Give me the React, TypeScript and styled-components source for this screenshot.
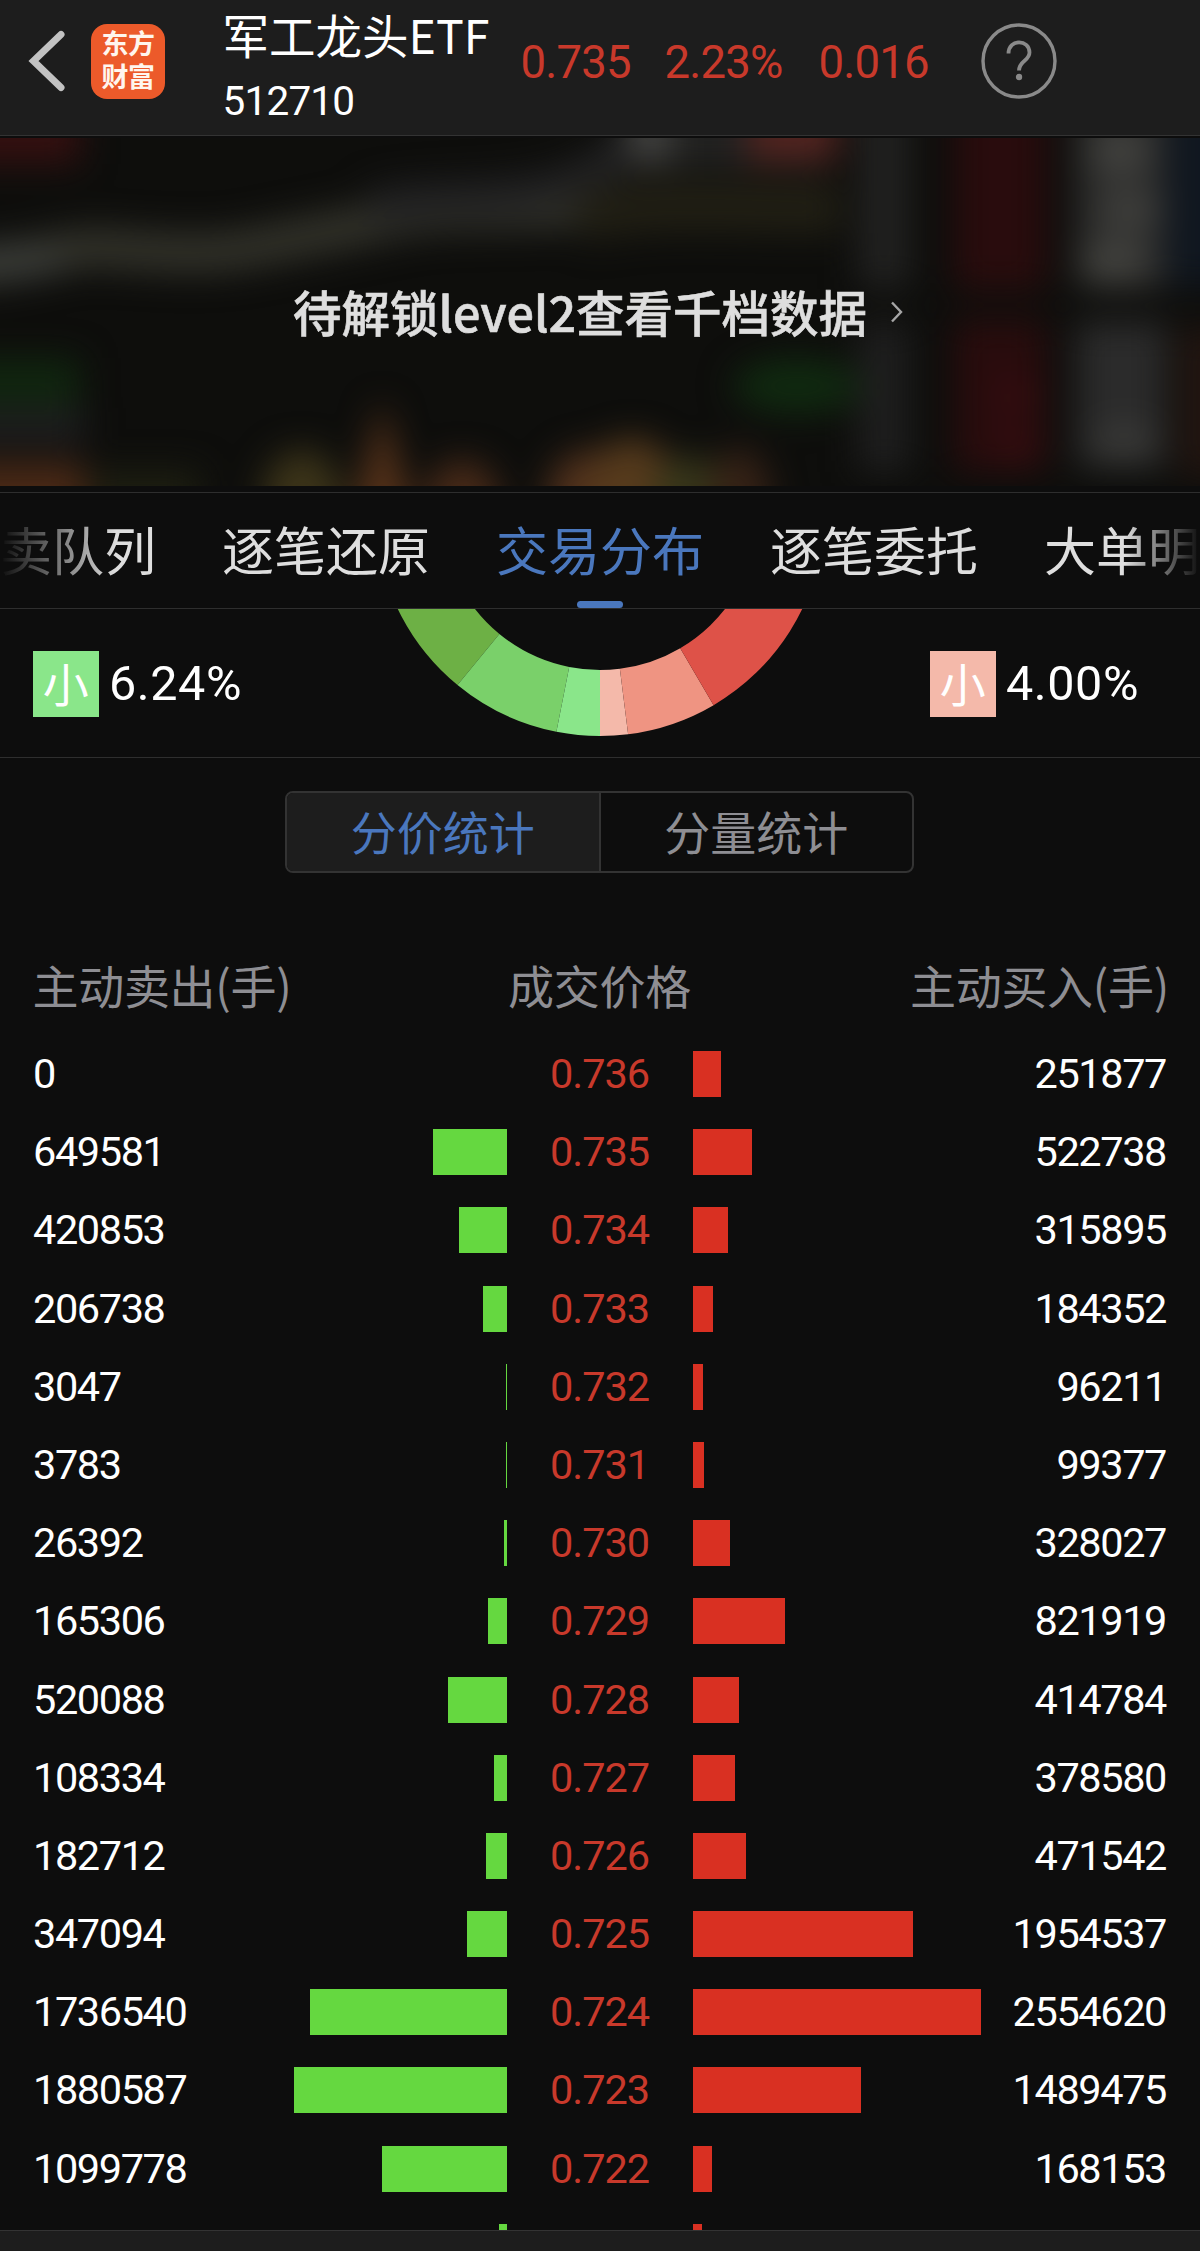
import React from "react";
import styled, { createGlobalStyle } from "styled-components";

const CJK = '"Noto Sans CJK SC", "Noto Sans", sans-serif';
const NUM = 'Roboto, "Noto Sans CJK SC", sans-serif';

const Global = createGlobalStyle`
  body { margin: 0; background: #0d0d0d; }
  * { box-sizing: border-box; }
`;

const Page = styled.main`
  width: 1200px;
  height: 2251px;
  overflow: hidden;
  display: flex;
  flex-direction: column;
  background: #0d0d0d;
  color: #fff;
  font-family: ${CJK};
`;

/* ---------- header ---------- */

const Header = styled.header`
  flex: none;
  height: 136px;
  display: flex;
  align-items: flex-start;
  padding-left: 27px;
  background: #1d1d1d;
  border-bottom: 1px solid #333;
`;

const BackIcon = styled.svg`
  flex: none;
  width: 40px;
  height: 64px;
  margin-top: 29px;
`;

const Logo = styled.div`
  flex: none;
  width: 74px;
  height: 75px;
  margin: 24px 0 0 24px;
  padding-top: 5px;
  border-radius: 16px;
  background: #ec5a2a;
  color: #fff6ee;
  font-family: "Liberation Sans", "Noto Sans CJK SC", sans-serif;
  font-size: 27px;
  font-weight: 700;
  letter-spacing: -0.6px;
  text-align: center;
`;

const LogoLine = styled.div`
  height: 33px;
  line-height: 33px;
`;

const Names = styled.div`
  flex: none;
  width: 298px;
  margin-left: 57.5px;
  display: flex;
  flex-direction: column;
`;

const FundName = styled.div`
  height: 73px;
  font-size: 46.5px;
  line-height: 68px;
  white-space: nowrap;
`;

const FundCode = styled.div`
  height: 56px;
  font-family: ${NUM};
  font-size: 40.5px;
  line-height: 56px;
  letter-spacing: -0.8px;
`;

const Quotes = styled.div`
  flex: none;
  width: 460px;
  display: grid;
  grid-template-columns: 144px 154px 1fr;
  color: #c8392b;
  font-family: ${NUM};
  font-size: 45.5px;
  line-height: 126px;
  letter-spacing: -0.8px;
`;

const HelpIcon = styled.svg`
  flex: none;
  width: 78px;
  height: 78px;
  margin-top: 22px;
  margin-left: -1px;
`;

/* ---------- level2 banner ---------- */

const Banner = styled.section`
  flex: none;
  position: relative;
  height: 348px;
  margin-top: 2px;
  overflow: hidden;
  display: flex;
  align-items: center;
  justify-content: center;
`;

const BlurredChart = styled.svg`
  position: absolute;
  inset: 0;
  width: 1200px;
  height: 348px;
`;

const BannerText = styled.div`
  position: relative;
  display: flex;
  align-items: center;
  gap: 23px;
  margin-left: -4px;
  margin-top: -3px;
  color: #dedede;
  font-size: 48.5px;
  font-weight: 500;
  -webkit-text-stroke: 0.6px #dedede;
  line-height: 72px;
  white-space: nowrap;
`;

const Chevron = styled.svg`
  width: 13px;
  height: 24px;
  margin-top: 2px;
`;

/* ---------- tabs ---------- */

const Tabs = styled.nav`
  flex: none;
  position: relative;
  height: 117px;
  margin-top: 6px;
  border-top: 1px solid #2e2e2e;
  border-bottom: 1px solid #2e2e2e;
  display: flex;
  gap: 66px;
  overflow: hidden;

  &::after {
    content: "";
    position: absolute;
    inset: 0;
    pointer-events: none;
    background: linear-gradient(90deg, #0d0d0d 0, rgba(13, 13, 13, 0) 116px,
      rgba(13, 13, 13, 0) 1124px, #0d0d0d 1200px);
  }
`;

const Tab = styled.div<{ $active?: boolean }>`
  flex: none;
  display: flex;
  flex-direction: column;
  align-items: center;
  justify-content: space-between;
  color: ${(p) => (p.$active ? "#4a77bd" : "#dedede")};
  font-size: 52px;
  line-height: 108px;
  white-space: nowrap;
`;

const TabLabel = styled.span`
  height: 108px;
  padding-top: 2px;
`;

const Indicator = styled.i`
  width: 46px;
  height: 7px;
  border-radius: 4px;
  background: #4a77bd;
`;

/* ---------- distribution ---------- */

const Distribution = styled.section`
  flex: none;
  height: 149px;
  display: grid;
  grid-template-columns: 300px 600px 300px;
  border-bottom: 1px solid #2e2e2e;
`;

const Legend = styled.div<{ $inset: number }>`
  display: flex;
  align-items: center;
  gap: 10px;
  height: 66px;
  margin-top: 42px;
  padding-left: ${(p) => p.$inset}px;
  font-family: ${NUM};
  font-size: 48.5px;
  line-height: 70px;
  letter-spacing: 0.6px;
`;

const Chip = styled.span<{ $color: string }>`
  width: 66px;
  height: 66px;
  background: ${(p) => p.$color};
  font-family: ${CJK};
  font-size: 46px;
  line-height: 62px;
  text-align: center;
`;

const Donut = styled.svg`
  width: 600px;
  height: 147px;
`;

/* ---------- segmented control ---------- */

const Segmented = styled.div`
  flex: none;
  align-self: center;
  width: 629px;
  height: 82px;
  margin: 33px 0 0 -1px;
  display: flex;
  border: 2px solid #333;
  border-radius: 8px;
  overflow: hidden;
`;

const Segment = styled.div<{ $active?: boolean }>`
  flex: 1;
  background: ${(p) => (p.$active ? "#1d1d1d" : "transparent")};
  color: ${(p) => (p.$active ? "#4a77bd" : "#8e8e93")};
  font-size: 46px;
  line-height: 75px;
  text-align: center;

  & + & {
    border-left: 2px solid #333;
  }
`;

/* ---------- table ---------- */

const Columns = styled.div`
  display: grid;
  grid-template-columns: 473px 186px 474px;
  padding-left: 34px;
`;

const HeadRow = styled(Columns)`
  flex: none;
  height: 66px;
  margin-top: 81px;
  grid-template-columns: 474px 186px 476.5px;
  padding-left: 32.5px;
  color: #8e8e93;
  font-size: 46px;
  line-height: 60px;
  letter-spacing: -0.3px;
  white-space: nowrap;

  & > :nth-child(2) { text-align: center; }
  & > :nth-child(3) { text-align: right; }
`;

const TableBody = styled.div`
  flex: none;
  height: 1210px;
  overflow: hidden;
  padding-top: 15px;
`;

const Row = styled(Columns)`
  height: 78.2px;
  grid-template-columns: 473.5px 186px 473.5px;
  padding-left: 33px;
  font-family: ${NUM};
  font-size: 41.5px;
  line-height: 77px;
  letter-spacing: -1.4px;
`;

const Side = styled.div`
  display: flex;
  justify-content: space-between;
`;

const Price = styled.div`
  color: #c8392b;
  text-align: center;
  letter-spacing: -1px;
`;

const Bar = styled.div<{ $color: string }>`
  height: 46px;
  margin-top: 16px;
  background: ${(p) => p.$color};
`;

const Footer = styled.footer`
  flex: 1;
  border-top: 1px solid #333;
  background: #1d1d1d;
`;

const BAR_MAX = 288.7;
const VOLUME_MAX = 2554620;
const barWidth = (v: number) => (v / VOLUME_MAX) * BAR_MAX;

const rows: [number, string, number][] = [
  [0, "0.736", 251877],
  [649581, "0.735", 522738],
  [420853, "0.734", 315895],
  [206738, "0.733", 184352],
  [3047, "0.732", 96211],
  [3783, "0.731", 99377],
  [26392, "0.730", 328027],
  [165306, "0.729", 821919],
  [520088, "0.728", 414784],
  [108334, "0.727", 378580],
  [182712, "0.726", 471542],
  [347094, "0.725", 1954537],
  [1736540, "0.724", 2554620],
  [1880587, "0.723", 1489475],
  [1099778, "0.722", 168153],
];

const CX = 300;
const CY = -97.5;
const R_OUT = 224.5;
const R_IN = 158.5;

/* Ring slice between two angles measured in degrees from straight down, positive to the right. */
const slice = (a: number, b: number) => {
  const pt = (deg: number, r: number) => {
    const t = (deg * Math.PI) / 180;
    return `${CX + r * Math.sin(t)} ${CY + r * Math.cos(t)}`;
  };
  return `M${pt(a, R_OUT)}A${R_OUT} ${R_OUT} 0 0 0 ${pt(b, R_OUT)}L${pt(b, R_IN)}A${R_IN} ${R_IN} 0 0 1 ${pt(a, R_IN)}Z`;
};

const slices: [number, number, string][] = [
  [-85, -39.4, "#6db045"],
  [-39.4, -11.2, "#7ad06a"],
  [-11.2, 0, "#8ae68a"],
  [0, 7.2, "#f4b9aa"],
  [7.2, 30.4, "#ef9482"],
  [30.4, 85, "#de5248"],
];

const Backdrop = () => (
  <BlurredChart viewBox="0 0 1200 348">
    <defs>
      <filter
        id="soft"
        x="-120"
        y="-120"
        width="1440"
        height="588"
        filterUnits="userSpaceOnUse"
        colorInterpolationFilters="sRGB"
      >
        <feGaussianBlur stdDeviation="17" />
      </filter>
    </defs>
    <rect width="1200" height="348" fill="#0e0e0c" />
    <g filter="url(#soft)">
      <rect x="-120" y="-100" width="200" height="126" fill="#341010" />
      <path d="M-60 130C40 126 60 108 100 110S200 120 250 110S340 92 400 80S520 78 590 68" fill="none" stroke="#32322a" strokeWidth="40" />
      <ellipse cx="0" cy="124" rx="70" ry="18" fill="#3c3e3a" />
      <path d="M370 70C430 56 500 66 560 48S610 10 660 -10" fill="none" stroke="#222223" strokeWidth="36" />
      <path d="M580 80C660 60 740 72 840 70" fill="none" stroke="#211f14" strokeWidth="50" />
      <rect x="625" y="-100" width="200" height="130" fill="#222221" />
      <rect x="630" y="-100" width="40" height="126" fill="#434341" />
      <rect x="748" y="-100" width="90" height="124" fill="#522420" />
      <rect x="858" y="-100" width="52" height="250" fill="#212120" />
      <rect x="858" y="184" width="52" height="150" fill="#1e1e1e" />
      <rect x="954" y="-100" width="92" height="252" fill="#290c0d" />
      <rect x="954" y="182" width="92" height="152" fill="#290c0d" />
      <ellipse cx="1018" cy="258" rx="24" ry="16" fill="#360d10" />
      <ellipse cx="1018" cy="308" rx="24" ry="16" fill="#360d10" />
      <rect x="1076" y="-100" width="90" height="250" fill="#2d2d2c" />
      <ellipse cx="1120" cy="14" rx="32" ry="22" fill="#42423f" />
      <ellipse cx="1130" cy="72" rx="32" ry="18" fill="#40403d" />
      <ellipse cx="1114" cy="124" rx="34" ry="20" fill="#444440" />
      <rect x="1076" y="184" width="90" height="146" fill="#2b2b2b" />
      <ellipse cx="1125" cy="305" rx="32" ry="18" fill="#3a3a38" />
      <rect x="1168" y="-100" width="130" height="248" fill="#101720" />
      <rect x="1180" y="190" width="120" height="150" fill="#221510" />
      <rect x="-120" y="220" width="200" height="48" fill="#10260f" />
      <rect x="-120" y="270" width="205" height="36" fill="#1e1e1f" />
      <ellipse cx="797" cy="248" rx="64" ry="28" fill="#102a10" />
      <rect x="-120" y="324" width="205" height="130" fill="#4a2916" />
      <rect x="90" y="332" width="110" height="120" fill="#1d1e11" />
      <ellipse cx="302" cy="362" rx="40" ry="50" fill="#3c3419" />
      <path d="M338 440L382 262L428 440Z" fill="#5a341a" />
      <ellipse cx="462" cy="366" rx="38" ry="44" fill="#482a18" />
      <ellipse cx="590" cy="362" rx="44" ry="50" fill="#50301c" />
      <ellipse cx="632" cy="358" rx="46" ry="58" fill="#563a1c" />
      <ellipse cx="690" cy="364" rx="38" ry="46" fill="#36361a" />
      <ellipse cx="740" cy="360" rx="30" ry="50" fill="#362216" />
    </g>
  </BlurredChart>
);

export default function App() {
  return (
    <Page>
      <Global />
      <Header>
        <BackIcon viewBox="0 0 40 64">
          <path d="M34 5.5L6.5 32L34 58.5" fill="none" stroke="#c2c2c2" strokeWidth="7" strokeLinecap="round" />
        </BackIcon>
        <Logo>
          <LogoLine>东方</LogoLine>
          <LogoLine>财富</LogoLine>
        </Logo>
        <Names>
          <FundName>军工龙头ETF</FundName>
          <FundCode>512710</FundCode>
        </Names>
        <Quotes>
          <span>0.735</span>
          <span>2.23%</span>
          <span>0.016</span>
        </Quotes>
        <HelpIcon viewBox="0 0 78 78" fill="none" stroke="#8a8a8a">
          <circle cx="39" cy="39" r="36" strokeWidth="3.4" />
          <path d="M28.5 31.5C28.5 16.5 49.5 17 49.5 30.5C49.5 39 39 38.5 39 48.5" strokeWidth="3.8" />
          <circle cx="39" cy="55" r="3.2" fill="#8a8a8a" stroke="none" />
        </HelpIcon>
      </Header>

      <Banner>
        <Backdrop />
        <BannerText>
          待解锁level2查看千档数据
          <Chevron viewBox="0 0 13 24">
            <path d="M2 2.5L11 12L2 21.5" fill="none" stroke="#a6a6a6" strokeWidth="2.4" />
          </Chevron>
        </BannerText>
      </Banner>

      <Tabs>
        <Tab><TabLabel>卖队列</TabLabel></Tab>
        <Tab><TabLabel>逐笔还原</TabLabel></Tab>
        <Tab $active>
          <TabLabel>交易分布</TabLabel>
          <Indicator />
        </Tab>
        <Tab><TabLabel>逐笔委托</TabLabel></Tab>
        <Tab><TabLabel>大单明</TabLabel></Tab>
      </Tabs>

      <Distribution>
        <Legend $inset={33}>
          <Chip $color="#8ae68a">小</Chip>6.24%
        </Legend>
        <Donut viewBox="0 0 600 147">
          {slices.map(([a, b, color]) => (
            <path key={a} d={slice(a, b)} fill={color} />
          ))}
        </Donut>
        <Legend $inset={30}>
          <Chip $color="#f4b9aa">小</Chip>4.00%
        </Legend>
      </Distribution>

      <Segmented>
        <Segment $active>分价统计</Segment>
        <Segment>分量统计</Segment>
      </Segmented>

      <HeadRow>
        <span>主动卖出(手)</span>
        <span>成交价格</span>
        <span>主动买入(手)</span>
      </HeadRow>
      <TableBody>
        {rows.map(([sell, price, buy]) => (
          <Row key={price}>
            <Side>
              <span>{sell}</span>
              <Bar $color="#65d840" style={{ width: barWidth(sell) }} />
            </Side>
            <Price>{price}</Price>
            <Side>
              <Bar $color="#d93022" style={{ width: barWidth(buy) }} />
              <span>{buy}</span>
            </Side>
          </Row>
        ))}
        <Row>
          <Side>
            <span />
            <Bar $color="#65d840" style={{ width: 8 }} />
          </Side>
          <Price />
          <Side>
            <Bar $color="#d93022" style={{ width: 9 }} />
          </Side>
        </Row>
      </TableBody>
      <Footer />
    </Page>
  );
}
